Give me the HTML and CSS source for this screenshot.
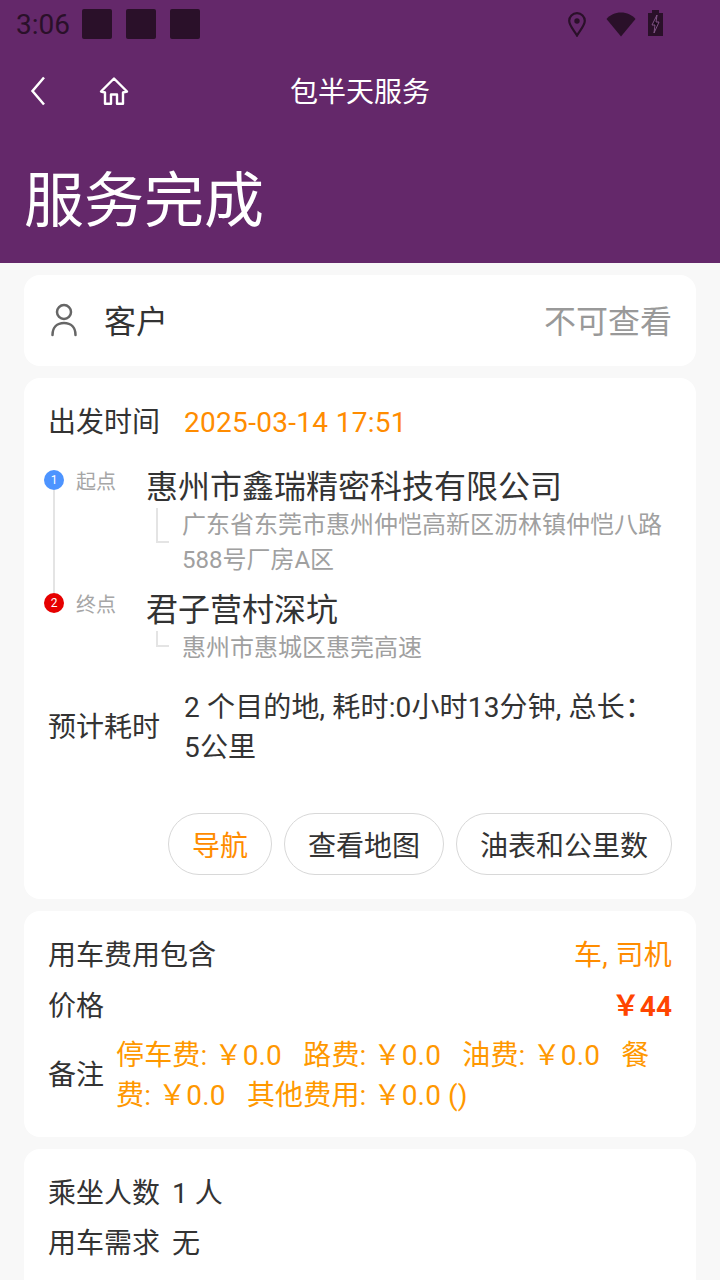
FILE: index.html
```html
<!DOCTYPE html>
<html lang="zh-CN">
<head>
  <meta charset="UTF-8">
  <meta name="viewport" content="width=device-width, initial-scale=1.0">
  <title>包半天服务</title>
  <link rel="stylesheet" href="styles.css">
</head>
<body>
  <header class="top">
    <div class="status">
      <span class="clock">3:06</span>
      <span class="note"></span>
      <span class="note"></span>
      <span class="note"></span>
      <span class="status-icons">
        <svg class="ic-pin" width="18" height="25" viewBox="0 0 18 25"><path d="M9 1.200C4.500 1.200 1.200 4.600 1.200 8.800 1.200 13.800 6.500 18.800 9 23.500 11.500 18.800 16.800 13.800 16.800 8.800 16.800 4.600 13.500 1.200 9 1.200Z" fill="none" stroke="#2a1029" stroke-width="2.200"/><circle cx="9" cy="9" r="2.700" fill="#2a1029"/></svg>
        <svg class="ic-wifi" width="30" height="25" viewBox="0 0 30 25"><path d="M0.500 7C4 3 9 0.500 15 0.500S26 3 29.500 7L15 24.500Z" fill="#2a1029"/></svg>
        <svg class="ic-batt" width="15" height="26" viewBox="0 0 15 26"><path d="M4 0H11V3H15V26H0V3H4Z" fill="#2a1029"/><path d="M9 5L4 15H7L6 23 11 12H8Z" fill="#1c0a1c" stroke="#8a5a90" stroke-width="0.900"/></svg>
      </span>
    </div>
    <nav class="navbar">
      <svg class="ic-back" width="18" height="30" viewBox="0 0 18 30"><path d="M15 1.500L3.500 15 15 28.500" fill="none" stroke="#fff" stroke-width="2.500"/></svg>
      <svg class="ic-home" width="30" height="30" viewBox="0 0 30 30"><path d="M15 2.500L2 15.500 6 16.500 6 27.800 12 27.800 12 18.500 18 18.500 18 27.800 24 27.800 24 16.500 28 15.500Z" fill="none" stroke="#fff" stroke-width="2.400" stroke-linejoin="round"/></svg>
      <h2 class="nav-title">包半天服务</h2>
    </nav>
    <h1 class="state">服务完成</h1>
  </header>

  <main class="list">
    <section class="card customer">
      <svg class="ic-user" width="28" height="34" viewBox="0 0 28 34"><circle cx="14" cy="9" r="7" fill="none" stroke="#666" stroke-width="2.500"/><path d="M2.500 32C2.500 24.500 7 20 14 20S25.500 24.500 25.500 32" fill="none" stroke="#666" stroke-width="2.500" stroke-linecap="round"/></svg>
      <span class="customer-label">客户</span>
      <span class="customer-value">不可查看</span>
    </section>

    <section class="card trip">
      <div class="depart">
        <span class="label">出发时间</span>
        <span class="depart-time">2025-03-14 17:51</span>
      </div>
      <div class="stops">
        <div class="stop stop-first">
          <div class="marker"><span class="dot dot-blue">1</span></div>
          <span class="stop-tag">起点</span>
          <div class="stop-body">
            <div class="stop-name">惠州市鑫瑞精密科技有限公司</div>
            <div class="stop-addr">广东省东莞市惠州仲恺高新区沥林镇仲恺八路588号厂房A区</div>
          </div>
        </div>
        <div class="stop">
          <div class="marker"><span class="dot dot-red">2</span></div>
          <span class="stop-tag">终点</span>
          <div class="stop-body">
            <div class="stop-name">君子营村深坑</div>
            <div class="stop-addr">惠州市惠城区惠莞高速</div>
          </div>
        </div>
      </div>
      <div class="estimate">
        <span class="label">预计耗时</span>
        <p class="estimate-text">2 个目的地, 耗时:0小时13分钟, 总长：5公里</p>
      </div>
      <div class="actions">
        <button class="pill pill-on">导航</button>
        <button class="pill">查看地图</button>
        <button class="pill">油表和公里数</button>
      </div>
    </section>

    <section class="card fee">
      <div class="fee-row">
        <span class="label">用车费用包含</span>
        <span class="orange">车, 司机</span>
      </div>
      <div class="fee-row">
        <span class="label">价格</span>
        <span class="price">￥44</span>
      </div>
      <div class="fee-note">
        <span class="label">备注</span>
        <p class="note-text">停车费: ￥0.0 &nbsp; 路费: ￥0.0 &nbsp; 油费: ￥0.0 &nbsp; 餐费: ￥0.0 &nbsp; 其他费用: ￥0.0 ()</p>
      </div>
    </section>

    <section class="card extra">
      <div class="extra-row"><span>乘坐人数</span><span>1 人</span></div>
      <div class="extra-row"><span>用车需求</span><span>无</span></div>
    </section>
  </main>
</body>
</html>
```

FILE: styles.css
```css
html, body {
  height: 1280px;
  overflow: hidden;
}
body {
  font-family: Roboto, "Noto Sans CJK SC", sans-serif;
  background-color: #f8f8f8;
  color: #333;
  margin: 0;
  padding: 0;
}
.top {
  background-color: #64286a;
  color: white;
  height: 263px;
}
.status {
  display: flex;
  align-items: center;
  height: 48px;
  padding-left: 16px;
}
.clock {
  font-size: 28px;
  color: #2a1029;
  margin-right: 12px;
}
.note {
  width: 30px;
  height: 30px;
  border-radius: 2px;
  background-color: #2a1029;
  margin-right: 14px;
}
.status-icons {
  display: flex;
  align-items: center;
  margin-left: auto;
  margin-right: 57px;
}
.ic-pin { margin-right: 20px; }
.ic-wifi { margin-right: 12px; }
.ic-batt { margin-bottom: 2px; }
.navbar {
  position: relative;
  display: flex;
  align-items: center;
  height: 86px;
  padding-left: 29px;
}
.ic-home { margin-left: 52px; }
.nav-title {
  position: absolute;
  left: 0;
  right: 0;
  top: 25px;
  margin: 0;
  text-align: center;
  font-size: 28px;
  line-height: 40px;
  font-weight: 400;
}
.state {
  margin: 28px 0 0 24px;
  font-size: 60px;
  line-height: 80px;
  font-weight: 400;
}
.list {
  padding: 12px 24px;
  display: flex;
  flex-direction: column;
  gap: 12px;
}
.card {
  background-color: white;
  border-radius: 16px;
}
.customer {
  display: flex;
  align-items: center;
  height: 91px;
  padding: 2px 24px 0;
  box-sizing: border-box;
}
.ic-user {
  margin-left: 2px;
  margin-bottom: 4px;
}
.customer-label {
  font-size: 32px;
  line-height: 40px;
  margin-left: 26px;
}
.customer-value {
  margin-left: auto;
  font-size: 32px;
  line-height: 40px;
  color: #999;
}
.label {
  font-size: 28px;
  line-height: 40px;
  flex-shrink: 0;
}
.trip {
  padding: 25px 24px 24px;
  height: 521px;
  box-sizing: border-box;
}
.depart {
  display: flex;
  align-items: center;
  height: 40px;
}
.depart-time {
  font-size: 28px;
  line-height: 40px;
  letter-spacing: 0.3px;
  color: #ff8c00;
  margin-left: 24px;
}
.stops {
  margin-top: 22px;
}
.stop {
  display: flex;
  position: relative;
}
.stop-first {
  margin-bottom: 10px;
}
.marker {
  width: 28px;
  margin-left: -4px;
  margin-top: 5px;
  flex-shrink: 0;
}
.stop-first .marker::after {
  content: "";
  position: absolute;
  left: 5px;
  top: 25px;
  bottom: -15px;
  width: 2px;
  background-color: #e4e4e4;
}
.dot {
  display: block;
  width: 20px;
  height: 20px;
  border-radius: 50%;
  color: white;
  font-size: 12px;
  line-height: 20px;
  text-align: center;
}
.dot-blue { background-color: #4d94ff; }
.dot-red { background-color: #e60000; }
.stop-tag {
  width: 70px;
  margin-left: 4px;
  margin-top: 6px;
  font-size: 20px;
  line-height: 22px;
  color: #a6a6a6;
  flex-shrink: 0;
}
.stop-body {
  flex: 1;
  padding-top: 1px;
}
.stop-name {
  font-size: 32px;
  line-height: 42px;
  color: #333;
}
.stop-addr {
  position: relative;
  margin-left: 36px;
  font-size: 24px;
  line-height: 35px;
  color: #a0a0a0;
}
.stop-addr::before {
  content: "";
  position: absolute;
  left: -26px;
  top: 0;
  width: 11px;
  height: 14px;
  border-left: 2px solid #e4e4e4;
  border-bottom: 2px solid #e4e4e4;
}
.stop-first .stop-addr::before {
  height: 33px;
}
.estimate {
  display: flex;
  align-items: center;
  margin-top: 22px;
}
.estimate-text {
  margin: 0 0 0 24px;
  padding-right: 16px;
  font-size: 28px;
  line-height: 40px;
  letter-spacing: 0.15px;
}
.actions {
  display: flex;
  justify-content: flex-end;
  gap: 12px;
  margin-top: 45px;
}
.pill {
  font-family: inherit;
  font-size: 28px;
  color: #333;
  background-color: white;
  border: 1px solid #d8d8d8;
  border-radius: 31px;
  height: 62px;
  padding: 0 23px;
}
.pill-on {
  color: #ff8c00;
}
.fee {
  padding: 25px 24px 21px;
}
.fee-row {
  display: flex;
  justify-content: space-between;
  align-items: center;
  height: 40px;
  margin-bottom: 11px;
}
.fee-row + .fee-row {
  margin-bottom: 9px;
}
.orange {
  font-size: 28px;
  line-height: 40px;
  letter-spacing: 0.3px;
  color: #ff8c00;
}
.price {
  font-size: 28px;
  line-height: 40px;
  font-weight: 700;
  color: #ff4500;
}
.fee-note {
  display: flex;
  align-items: center;
}
.note-text {
  margin: 0 0 0 12px;
  font-size: 28px;
  line-height: 40px;
  letter-spacing: 0.15px;
  color: #ff9800;
}
.extra {
  padding: 25px 24px;
  height: 300px;
}
.extra-row {
  display: flex;
  gap: 12px;
  font-size: 28px;
  line-height: 40px;
  margin-bottom: 10px;
}
```
